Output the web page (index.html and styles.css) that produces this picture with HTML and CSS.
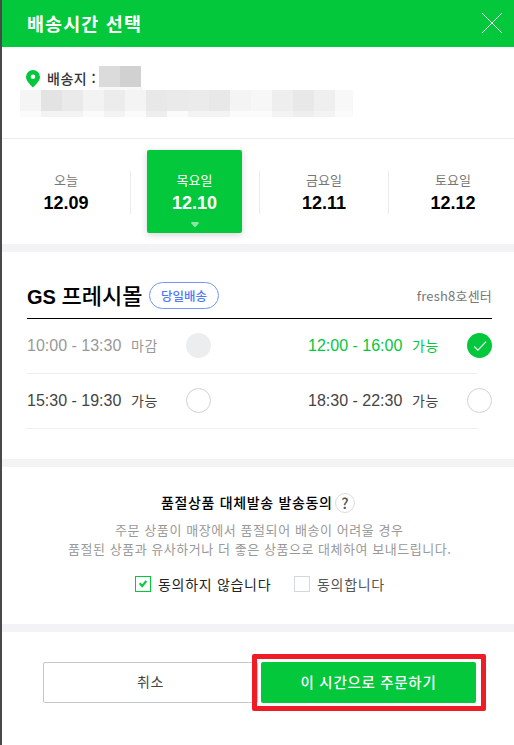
FILE: index.html
```
<!DOCTYPE html>
<html lang="ko">
<head>
<meta charset="utf-8">
<title>배송시간 선택</title>
<link rel="stylesheet" href="styles.css">
</head>
<body>
<main class="sheet">
  <header class="header">
    <h1 class="title">배송시간 선택</h1>
    <svg class="close" width="22" height="22" viewBox="0 0 22 22" fill="none" stroke="#fff" stroke-width="1"><path d="M1 1l20 20M21 1L1 21"/></svg>
  </header>

  <section class="address">
    <div class="place">
      <svg class="pin" width="14" height="18" viewBox="0 0 14 18"><path fill="#03c83c" fill-rule="evenodd" d="M7 0a7 7 0 0 1 7 7c0 3.5-3.6 7-7 10.600C3.600 14 0 10.500 0 7a7 7 0 0 1 7-7zm0 4.500a2.300 2.300 0 1 0 0 4.600 2.300 2.300 0 0 0 0-4.600z"/></svg>
      <span class="place-label">배송지 :</span>
      <svg class="name-mask" width="44" height="26" shape-rendering="crispEdges"><path fill="#f8f8f8" d="M0 21h44v5H0z"/><path fill="#dbdbdb" d="M0 0h21v21H0z"/><path fill="#d1d1d1" d="M21 0h21v21H21z"/></svg>
    </div>
    <svg class="address-mask" width="333" height="27" shape-rendering="crispEdges">
      <path fill="#f5f5f5" d="M0 0h21v21H0z"/><path fill="#e3e3e3" d="M21 0h21v21H21z"/><path fill="#eaeaea" d="M42 0h21v21H42z"/><path fill="#f3f3f3" d="M63 0h21v21H63z"/><path fill="#ececec" d="M84 0h21v21H84z"/><path fill="#f4f4f4" d="M105 0h21v21h-21z"/><path fill="#e8e8e8" d="M126 0h21v21h-21z"/><path fill="#eaeaea" d="M147 0h21v21h-21z"/><path fill="#ebebeb" d="M168 0h21v21h-21z"/><path fill="#e8e8e8" d="M189 0h21v21h-21z"/><path fill="#f4f4f4" d="M210 0h21v21h-21z"/><path fill="#f7f7f7" d="M231 0h21v21h-21z"/><path fill="#eee" d="M252 0h21v21h-21z"/><path fill="#e8e8e8" d="M273 0h21v21h-21z"/><path fill="#efefef" d="M294 0h21v21h-21z"/><path fill="#f8f8f8" d="M315 0h18v21h-18z"/>
      <path fill="#fbfbfb" d="M0 21h333v6H0z"/><path fill="#f3f3f3" d="M21 21h42v6H21zM84 21h21v6H84zM168 21h42v6h-42zM252 21h63v6h-63z"/><path fill="#eee" d="M126 21h21v6h-21zM273 21h21v6h-21z"/>
    </svg>
  </section>

  <section class="dates">
    <div class="date"><div class="day-box"><span class="day">오늘</span><b class="number">12.09</b></div></div>
    <div class="date"><div class="day-box selected"><span class="day">목요일</span><b class="number">12.10</b><svg class="arrow" width="8" height="5" viewBox="0 0 8 5"><path fill="#8ce5a5" d="M1.200 0h5.600c1 0 1.400.8.800 1.400L5 4.600c-.6.600-1.400.6-2 0L.400 1.400C-.2.800.2 0 1.200 0z"/></svg></div></div>
    <div class="date"><div class="day-box"><span class="day">금요일</span><b class="number">12.11</b></div></div>
    <div class="date"><div class="day-box"><span class="day">토요일</span><b class="number">12.12</b></div></div>
  </section>

  <section class="store">
    <div class="store-head">
      <h2 class="store-name"><span class="latin">GS </span>프레시몰</h2>
      <span class="tag">당일배송</span>
      <span class="center">fresh8호센터</span>
    </div>
    <div class="slots">
      <div class="slot closed"><span class="time">10:00 - 13:30</span><span class="state">마감</span><i class="radio"></i></div>
      <div class="slot chosen"><span class="time">12:00 - 16:00</span><span class="state">가능</span><i class="radio"><svg width="25" height="25" viewBox="0 0 25 25" fill="none" stroke="#fff" stroke-width="1.100"><path d="M7.300 13.500l3.600 3.700 8.200-8.600"/></svg></i></div>
    </div>
    <div class="slots">
      <div class="slot"><span class="time">15:30 - 19:30</span><span class="state">가능</span><i class="radio"></i></div>
      <div class="slot"><span class="time">18:30 - 22:30</span><span class="state">가능</span><i class="radio"></i></div>
    </div>
  </section>

  <section class="consent">
    <h3 class="consent-title"><span class="consent-text">품절상품 대체발송 발송동의</span><span class="help">?</span></h3>
    <p class="line first">주문 상품이 매장에서 품절되어 배송이 어려울 경우</p>
    <p class="line second">품절된 상품과 유사하거나 더 좋은 상품으로 대체하여 보내드립니다.</p>
    <div class="choices">
      <span class="box on"><svg width="8" height="8" viewBox="0 0 8 8" fill="none" stroke="#03c83c" stroke-width="2"><path d="M.7 3.200l2.500 2.900L7.300 1"/></svg></span>
      <span class="choice active">동의하지 않습니다</span>
      <span class="box"></span>
      <span class="choice">동의합니다</span>
    </div>
  </section>

  <footer class="actions">
    <button class="button cancel" type="button">취소</button>
    <button class="button order" type="button">이 시간으로 주문하기</button>
  </footer>
</main>
</body>
</html>
```
FILE: styles.css
```
* { box-sizing: border-box; }
body {
  margin: 0;
  overflow: hidden;
  background: #fff;
  font-family: "Noto Sans CJK KR", sans-serif;
  color: #000;
}
h1, h2, h3, p { margin: 0; }
svg { display: block; flex: none; }
span, b { white-space: nowrap; }
.sheet {
  width: 514px;
  height: 745px;
  border-left: 2px solid #48484a;
  overflow: hidden;
}
.header {
  display: flex;
  justify-content: space-between;
  height: 47px;
  padding: 12px 11px 0 25px;
  background: #03c83c;
}
.title {
  color: #fff;
  font-size: 18.5px;
  line-height: 22px;
  letter-spacing: 1.1px;
  font-weight: 700;
}
.address {
  height: 92px;
  padding: 19px 0 0 18px;
  border-bottom: 1px solid #ebebeb;
}
.place { display: flex; height: 24px; }
.pin { margin: 4px 7px 0 6px; }
.place-label {
  width: 52px;
  font-size: 14px;
  line-height: 24px;
  letter-spacing: .5px;
  font-weight: 500;
  color: #333;
}
.dates {
  display: grid;
  grid-template-columns: repeat(4, 129px);
  height: 105px;
  padding-top: 11px;
}
.date {
  position: relative;
  display: flex;
  justify-content: center;
  padding-right: 1px;
}
.date:not(:last-child)::after {
  content: "";
  position: absolute;
  right: 0;
  top: 21px;
  width: 1px;
  height: 43px;
  background: #ebebeb;
}
.day-box {
  display: flex;
  flex-direction: column;
  align-items: center;
  width: 95px;
  height: 83px;
  padding-top: 20px;
  border-radius: 2px;
}
.selected {
  margin-left: -1px;
  background: #03c83c;
  color: #fff;
  box-shadow: 0 2px 7px rgba(0, 0, 0, .17);
}
.day { font-size: 13px; line-height: 20px; color: #777; }
.selected .day { color: #fff; }
.number { margin-top: 2px; font: 700 18px/23px "Liberation Sans", sans-serif; }
.arrow { margin-top: 7px; }
.store {
  height: 215px;
  border-top: 8px solid #f3f3f5;
  padding: 0 22px 0 25px;
}
.store-head {
  display: flex;
  height: 67px;
  padding-top: 30px;
  border-bottom: 1px solid #000;
}
.store-name {
  width: 122px;
  font-size: 22px;
  line-height: 25px;
  font-weight: 500;
  white-space: nowrap;
}
.latin { font: 700 20px "Liberation Sans", sans-serif; }
.tag {
  width: 70px;
  height: 27px;
  border: 1px solid #7396f7;
  border-radius: 14px;
  color: #5279f5;
  font-size: 12.500px;
  line-height: 26px;
  font-weight: 500;
  text-align: center;
}
.center {
  margin-left: auto;
  font-size: 13px;
  line-height: 27px;
  letter-spacing: .2px;
  color: #777;
}
.slots {
  display: grid;
  grid-template-columns: 281px 184px;
  width: 450px;
  height: 55px;
  border-bottom: 1px solid #eee;
}
.slot {
  display: grid;
  grid-template-columns: 104px 55px 25px;
  height: 53px;
  align-items: center;
  color: #444;
}
.closed { color: #999; }
.chosen { color: #03c83c; }
.time { padding-top: 1px; font: 16px/20px "Liberation Sans", sans-serif; }
.state {
  padding-bottom: 1px;
  font-size: 14px;
  line-height: 20px;
  letter-spacing: .7px;
}
.radio {
  width: 25px;
  height: 25px;
  border: 1px solid #d1d1db;
  border-radius: 50%;
}
.closed .radio { border: 0; background: #ebedef; }
.chosen .radio { border: 0; background: #03c83c; }
.consent {
  height: 165px;
  border-top: 8px solid #f3f3f5;
  padding-top: 25px;
}
.consent-title {
  display: flex;
  height: 22px;
  padding-left: 159px;
  font-size: 14px;
  font-weight: 500;
  line-height: 21px;
}
.consent-text { width: 174px; letter-spacing: .65px; }
.help {
  width: 20px;
  height: 20px;
  margin-top: 1px;
  border: 1px solid #ddd;
  border-radius: 50%;
  color: #555;
  font: 500 15px/18px "Noto Sans CJK KR", sans-serif;
  text-align: center;
}
.line {
  font-size: 13px;
  line-height: 19px;
  letter-spacing: .58px;
  color: #999;
  white-space: nowrap;
}
.first { margin-top: 6px; padding-left: 113px; }
.second { padding-left: 66px; letter-spacing: .54px; }
.choices { display: flex; margin-top: 17px; padding-left: 133px; }
.box {
  display: grid;
  place-items: center;
  width: 16px;
  height: 16px;
  margin-top: 1px;
  border: 1px solid #d4d7dd;
}
.box.on { border-color: #03c83c; }
.choice {
  margin-left: 7px;
  font-size: 14px;
  line-height: 19px;
  letter-spacing: .7px;
  color: #555;
}
.choice.active { width: 136px; color: #222; }
.actions {
  display: flex;
  height: 121px;
  padding: 30px 0 0 41px;
  border-top: 8px solid #f3f3f5;
}
.button {
  height: 41px;
  padding: 0 0 2px;
  border: 1px solid #c2c7ce;
  border-radius: 2px;
  background: #fff;
  font: 14px/37px "Noto Sans CJK KR", sans-serif;
  letter-spacing: .7px;
  color: #444;
}
.cancel { width: 215px; }
.order {
  position: relative;
  width: 215px;
  margin-left: 3px;
  border: 0;
  background: #03c83c;
  color: #fff;
  font-size: 14.500px;
  font-weight: 500;
}
.order::after {
  content: "";
  position: absolute;
  inset: -8px -10px -8px -9px;
  border: 5px solid #ee1c25;
  border-radius: 2px;
}
```
